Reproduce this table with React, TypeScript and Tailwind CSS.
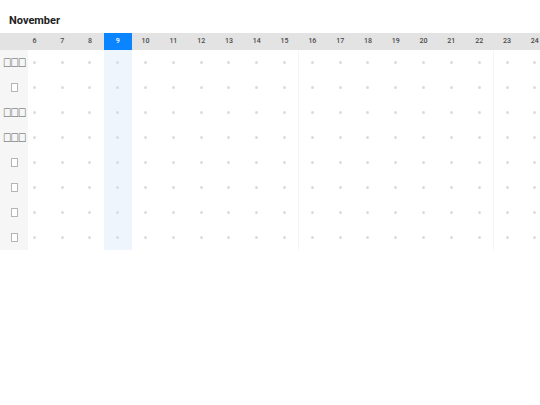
import React from "react";

const days = Array.from({ length: 19 }, (_, i) => i + 6);
const triple = "\u{E000}\u{E001}\u{E002}";
const labels = [triple, "", triple, triple, "", "", "", ""];

export default function App() {
  return (
    <div className="w-[540px] h-[405px] bg-white font-['Roboto',sans-serif] overflow-hidden">
      <div className="pt-[14px] pl-[9px] mb-[6px] text-[11px] leading-[13px] font-bold text-[#222]">November</div>
      <div className="flex overflow-hidden">
        <div className="relative z-10 w-[28px] shrink-0 flex flex-col bg-[#f6f6f6]">
          <div className="h-[17px] bg-[#e3e3e3]" />
          {labels.map((l, i) => (
            <div
              key={i}
              className="h-[25px] flex items-center justify-center text-[12px] tracking-[-1.5px] text-[#555] font-['Liberation_Sans',sans-serif]"
            >
              {l ? l : <span className="block w-[7px] h-[9px] border border-[#b5b5b5] bg-white" />}
            </div>
          ))}
        </div>
        <div className="flex -ml-[7.5px]">
          {days.map((d) => {
            const today = d === 9;
            const week = d === 16 || d === 23;
            return (
              <div key={d} className="w-[27.8px] shrink-0 flex flex-col">
                <div
                  className={
                    today
                      ? "h-[17px] flex items-center justify-center text-[7px] font-medium bg-[#0a84ff] text-white"
                      : "h-[17px] flex items-center justify-center text-[7px] font-medium bg-[#e3e3e3] text-[#4a4a4a]"
                  }
                >
                  {d}
                </div>
                <div
                  className={
                    (today ? "bg-[#eff5fd] " : "") + (week ? "border-l border-[#f5f5f5] " : "") + "flex flex-col"
                  }
                >
                  {labels.map((_, i) => (
                    <div key={i} className="h-[25px] flex items-center justify-center">
                      <div className="w-[3px] h-[3px] rounded-full bg-[#dcdcdc]" />
                    </div>
                  ))}
                </div>
              </div>
            );
          })}
        </div>
      </div>
    </div>
  );
}
